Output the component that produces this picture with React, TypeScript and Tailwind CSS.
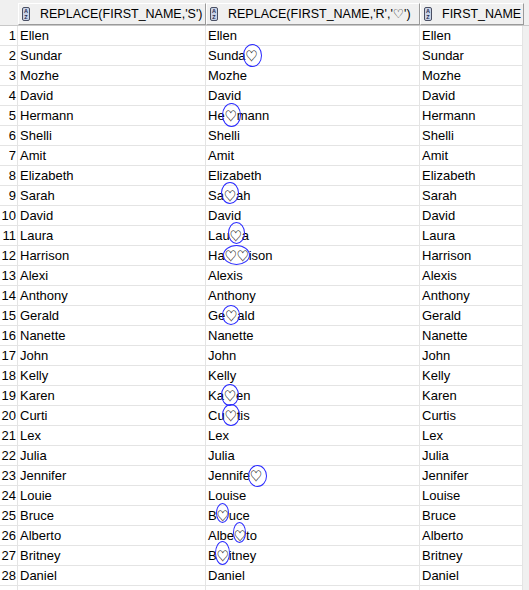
const rows: [string, string, string][] = [
  ["Ellen", "Ellen", "Ellen"],
  ["Sundar", "Sunda♡", "Sundar"],
  ["Mozhe", "Mozhe", "Mozhe"],
  ["David", "David", "David"],
  ["Hermann", "He♡mann", "Hermann"],
  ["Shelli", "Shelli", "Shelli"],
  ["Amit", "Amit", "Amit"],
  ["Elizabeth", "Elizabeth", "Elizabeth"],
  ["Sarah", "Sa♡ah", "Sarah"],
  ["David", "David", "David"],
  ["Laura", "Lau♡a", "Laura"],
  ["Harrison", "Ha♡♡ison", "Harrison"],
  ["Alexi", "Alexis", "Alexis"],
  ["Anthony", "Anthony", "Anthony"],
  ["Gerald", "Ge♡ald", "Gerald"],
  ["Nanette", "Nanette", "Nanette"],
  ["John", "John", "John"],
  ["Kelly", "Kelly", "Kelly"],
  ["Karen", "Ka♡en", "Karen"],
  ["Curti", "Cu♡tis", "Curtis"],
  ["Lex", "Lex", "Lex"],
  ["Julia", "Julia", "Julia"],
  ["Jennifer", "Jennife♡", "Jennifer"],
  ["Louie", "Louise", "Louise"],
  ["Bruce", "B♡uce", "Bruce"],
  ["Alberto", "Albe♡to", "Alberto"],
  ["Britney", "B♡itney", "Britney"],
  ["Daniel", "Daniel", "Daniel"],
  ["", "", ""],
]

// hand drawn circles: [offset x, offset y, width, height]
const marks: Record<number, [number, number, number, number]> = {
  1: [-3, -2, 19, 23],
  4: [-3, -3, 19, 24],
  8: [-3, -4, 18, 22],
  10: [-2, -4, 17, 22],
  11: [-2, -1, 27, 20],
  14: [-3, -1, 18, 20],
  18: [-3, -2, 18, 22],
  19: [-3, -2, 18, 22],
  22: [-2, -1, 19, 22],
  24: [-1, -3, 13, 20],
  25: [-1, -4, 13, 21],
  26: [-2, -5, 15, 24],
}

const SortIcon = () => (
  <svg width="8" height="14" viewBox="0 0 8 14" className="shrink-0">
    <rect x="0.5" y="0.5" width="7" height="13" rx="1.5" fill="#c9d3e6" stroke="#4a4f63" />
    <text x="4" y="6.3" fontSize="5.5" textAnchor="middle" fill="#1f2a50" fontFamily="Liberation Sans" fontWeight="bold">A</text>
    <text x="4" y="11.8" fontSize="5.5" textAnchor="middle" fill="#1f2a50" fontFamily="Liberation Sans" fontWeight="bold">Z</text>
  </svg>
)

const HeaderCell = ({ label, w }: { label: string; w: string }) => (
  <div className={`${w} h-[22px] mt-[3px] flex items-center gap-[10px] pl-[3px] bg-[#f0f0f0] border border-[#9a9a9a] border-l-white border-t-white overflow-hidden`}>
    <SortIcon />
    <span className="whitespace-nowrap text-[12.5px]">{label}</span>
  </div>
)

const Marked = ({ text, i }: { text: string; i: number }) => {
  const m = marks[i]
  if (!m) return <>{text}</>
  const a = text.indexOf("♡")
  const b = text.lastIndexOf("♡")
  return (
    <>
      {text.slice(0, a)}
      <span className="relative inline-block align-top leading-[19px] text-[12px]" style={{ fontFamily: "'Noto Sans CJK KR', 'DejaVu Sans', sans-serif" }}>
        {text.slice(a, b + 1)}
        <span
          className="absolute border border-[#2a2aff] rounded-[50%]"
          style={{ left: m[0], top: m[1], width: m[2], height: m[3] }}
        />
      </span>
      {text.slice(b + 1)}
    </>
  )
}

export default function App() {
  return (
    <div className="w-[529px] h-[590px] overflow-hidden bg-[#f0f0f0] text-[13px] text-black" style={{ fontFamily: "'Liberation Sans', 'DejaVu Sans', sans-serif" }}>
      <div className="flex h-[26px] border-b border-[#c8c8c8]">
        <div className="w-[18px] shrink-0" />
        <HeaderCell label="REPLACE(FIRST_NAME,'S')" w="w-[188px]" />
        <HeaderCell label="REPLACE(FIRST_NAME,'R','♡')" w="w-[214px]" />
        <HeaderCell label="FIRST_NAME" w="w-[104px]" />
      </div>
      <div className="w-[523px] bg-white">
        {rows.map((r, i) => (
          <div key={i} className="flex h-[20px] border-b border-[#e4e4e4] leading-[19px]">
            <div className="w-[18px] shrink-0 text-right pr-[1px] border-r border-[#e4e4e4]">{i + 1}</div>
            <div className="w-[188px] shrink-0 pl-[2px] border-r border-[#e4e4e4]">{r[0]}</div>
            <div className="w-[214px] shrink-0 pl-[2px] border-r border-[#e4e4e4] whitespace-nowrap">
              <Marked text={r[1]} i={i} />
            </div>
            <div className="w-[103px] shrink-0 pl-[2px] border-r border-[#e4e4e4]">{r[2]}</div>
          </div>
        ))}
      </div>
    </div>
  )
}
